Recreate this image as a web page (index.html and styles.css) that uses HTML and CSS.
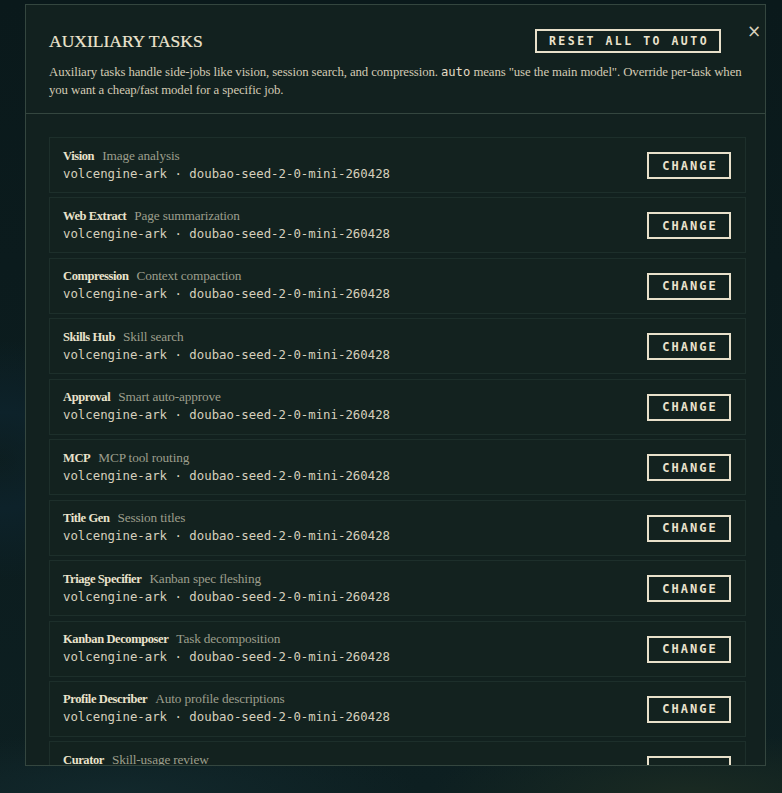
FILE: index.html
```html
<!DOCTYPE html>
<html>
<head>
    <meta charset="UTF-8">
    <title>Auxiliary Tasks</title>
    <link rel="stylesheet" href="styles.css">
</head>
<body>
<div class="backdrop">
    <div class="modal">
        <button class="close" title="Close">&times;</button>
        <div class="modal-head">
            <div class="head-row">
                <h2 class="title">AUXILIARY TASKS</h2>
                <button class="btn btn-reset">RESET ALL TO AUTO</button>
            </div>
            <p class="desc">Auxiliary tasks handle side-jobs like vision, session search, and compression. <code>auto</code> means "use the main model". Override per-task when you want a cheap/fast model for a specific job.</p>
        </div>
        <div class="task-list">
            <div class="task">
                <div class="task-info">
                    <div class="task-name"><b>Vision</b><span>Image analysis</span></div>
                    <div class="task-model">volcengine-ark · doubao-seed-2-0-mini-260428</div>
                </div>
                <button class="btn btn-change">CHANGE</button>
            </div>
            <div class="task">
                <div class="task-info">
                    <div class="task-name"><b>Web Extract</b><span>Page summarization</span></div>
                    <div class="task-model">volcengine-ark · doubao-seed-2-0-mini-260428</div>
                </div>
                <button class="btn btn-change">CHANGE</button>
            </div>
            <div class="task">
                <div class="task-info">
                    <div class="task-name"><b>Compression</b><span>Context compaction</span></div>
                    <div class="task-model">volcengine-ark · doubao-seed-2-0-mini-260428</div>
                </div>
                <button class="btn btn-change">CHANGE</button>
            </div>
            <div class="task">
                <div class="task-info">
                    <div class="task-name"><b>Skills Hub</b><span>Skill search</span></div>
                    <div class="task-model">volcengine-ark · doubao-seed-2-0-mini-260428</div>
                </div>
                <button class="btn btn-change">CHANGE</button>
            </div>
            <div class="task">
                <div class="task-info">
                    <div class="task-name"><b>Approval</b><span>Smart auto-approve</span></div>
                    <div class="task-model">volcengine-ark · doubao-seed-2-0-mini-260428</div>
                </div>
                <button class="btn btn-change">CHANGE</button>
            </div>
            <div class="task">
                <div class="task-info">
                    <div class="task-name"><b>MCP</b><span>MCP tool routing</span></div>
                    <div class="task-model">volcengine-ark · doubao-seed-2-0-mini-260428</div>
                </div>
                <button class="btn btn-change">CHANGE</button>
            </div>
            <div class="task">
                <div class="task-info">
                    <div class="task-name"><b>Title Gen</b><span>Session titles</span></div>
                    <div class="task-model">volcengine-ark · doubao-seed-2-0-mini-260428</div>
                </div>
                <button class="btn btn-change">CHANGE</button>
            </div>
            <div class="task">
                <div class="task-info">
                    <div class="task-name"><b>Triage Specifier</b><span>Kanban spec fleshing</span></div>
                    <div class="task-model">volcengine-ark · doubao-seed-2-0-mini-260428</div>
                </div>
                <button class="btn btn-change">CHANGE</button>
            </div>
            <div class="task">
                <div class="task-info">
                    <div class="task-name"><b>Kanban Decomposer</b><span>Task decomposition</span></div>
                    <div class="task-model">volcengine-ark · doubao-seed-2-0-mini-260428</div>
                </div>
                <button class="btn btn-change">CHANGE</button>
            </div>
            <div class="task">
                <div class="task-info">
                    <div class="task-name"><b>Profile Describer</b><span>Auto profile descriptions</span></div>
                    <div class="task-model">volcengine-ark · doubao-seed-2-0-mini-260428</div>
                </div>
                <button class="btn btn-change">CHANGE</button>
            </div>
            <div class="task">
                <div class="task-info">
                    <div class="task-name"><b>Curator</b><span>Skill-usage review</span></div>
                    <div class="task-model">volcengine-ark · doubao-seed-2-0-mini-260428</div>
                </div>
                <button class="btn btn-change">CHANGE</button>
            </div>
        </div>
    </div>
</div>
</body>
</html>
```

FILE: styles.css
```css
*{
    box-sizing:border-box;
}

html,body{
    margin:0;
    height:100%;
}

body{
    background:#0b1b1d;
    font-family:"Liberation Serif","DejaVu Serif",serif;
    color:#e6dec8;
}

.backdrop{
    height:100%;
    padding:4px 16px 27px 25px;
    background:
        radial-gradient(ellipse 160px 120px at 0px 460px,#10283020,#0d222a 40%,transparent 100%),
        radial-gradient(ellipse 260px 60px at 690px 793px,#1a2a22,transparent),
        radial-gradient(ellipse 300px 60px at 120px 793px,#12282c,transparent),
        linear-gradient(#0a191b,#0d1f21);
}

.modal{
    position:relative;
    width:741px;
    height:762px;
    background:#12211f;
    border:1px solid #34463f;
    display:flex;
    flex-direction:column;
    overflow:hidden;
}

.close{
    position:absolute;
    top:16px;
    right:1px;
    width:20px;
    height:20px;
    padding:0;
    border:0;
    background:none;
    color:#d8d0bc;
    font-family:"DejaVu Sans",sans-serif;
    font-size:17px;
    line-height:20px;
    cursor:pointer;
}

.modal-head{
    padding:24px 44px 14px 23px;
    border-bottom:1px solid #34463f;
}

.head-row{
    display:flex;
    align-items:center;
    justify-content:space-between;
}

.title{
    margin:0;
    font-size:17.5px;
    font-weight:normal;
    letter-spacing:0;
    color:#ece4cf;
    -webkit-text-stroke:0.2px #ece4cf;
}

.desc{
    margin:10px -40px 0 0;
    max-width:714px;
    font-size:12.8px;
    line-height:18px;
    letter-spacing:-0.1px;
    color:#d2cab4;
}

.desc code{
    font-family:"DejaVu Sans Mono",monospace;
    font-size:12.2px;
    line-height:1;
    letter-spacing:0;
    color:#e2dac4;
}

.btn{
    background:transparent;
    border:2px solid #e8e0ca;
    color:#ebe3cd;
    font-family:"DejaVu Sans Mono",monospace;
    font-weight:bold;
    font-size:11.5px;
    cursor:pointer;
}

.btn-reset{
    height:24px;
    width:186px;
    padding:0;
    letter-spacing:2.5px;
    text-indent:2px;
}

.task-list{
    flex:1;
    overflow:hidden;
    padding:23px 19px 0 23px;
    display:flex;
    flex-direction:column;
    gap:4.45px;
}

.task{
    flex:none;
    height:56px;
    display:flex;
    align-items:center;
    justify-content:space-between;
    padding:0 14px 0 13px;
    background:#13221f;
    border:1px solid #1d2f2b;
}

.task-name{
    font-size:12.5px;
    line-height:18px;
}

.task-name b{
    color:#eae2cc;
    margin-right:8px;
    letter-spacing:-0.4px;
}

.task-name span{
    font-size:13.3px;
    letter-spacing:-0.15px;
    color:#9c9e8c;
}

.task-model{
    font-family:"DejaVu Sans Mono",monospace;
    font-size:12.35px;
    line-height:19px;
    color:#d6d0bd;
}

.btn-change{
    width:84px;
    height:27px;
    padding:0;
    font-size:12px;
    letter-spacing:2px;
    text-indent:2px;
    margin-top:1px;
}
```
